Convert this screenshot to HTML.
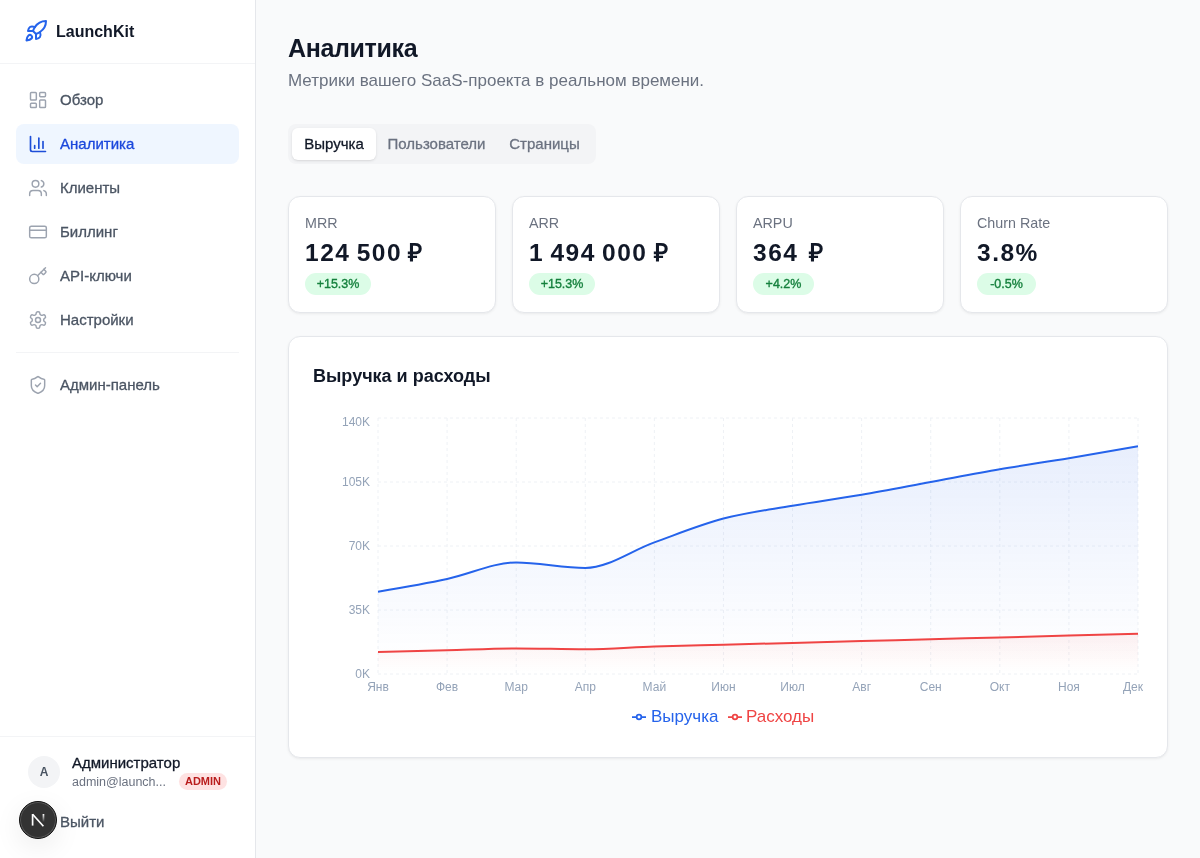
<!DOCTYPE html>
<html lang="ru">
<head>
<meta charset="utf-8">
<title>LaunchKit — Аналитика</title>
<style>
*{box-sizing:border-box;margin:0;padding:0}
html,body{width:1200px;height:858px;overflow:hidden}
body{font-family:"Liberation Sans",sans-serif;background:#f9fafb;position:relative;color:#111827;will-change:transform}
.abs{position:absolute}
.sidebar{position:absolute;left:0;top:0;width:256px;height:858px;background:#fff;border-right:1px solid #e5e7eb}
.logo{position:absolute;left:0;top:0;width:255px;height:64px;border-bottom:1px solid #f3f4f6}
.logo svg{position:absolute;left:24px;top:19px}
.logo .name{position:absolute;left:56px;top:22px;font-size:16px;font-weight:700;line-height:20px;color:#111827;white-space:nowrap}
.nav{position:absolute;left:16px;width:223px;height:40px;border-radius:8px}
.nav svg{position:absolute;left:12px;top:10px}
.nav span{position:absolute;left:44px;top:10px;font-size:15px;line-height:20px;color:#4b5563;white-space:nowrap;-webkit-text-stroke:0.3px currentColor}
.nav.active{background:#eff6ff}
.nav.active span{color:#1a47dc}
.divider{position:absolute;left:16px;top:352px;width:223px;height:1px;background:#f3f4f6}
.bottom{position:absolute;left:0;top:736px;width:255px;height:1px;background:#f3f4f6}
.avatar{position:absolute;left:28px;top:756px;width:32px;height:32px;border-radius:50%;background:#f3f4f6;color:#4b5563;font-size:12px;font-weight:700;text-align:center;line-height:32px}
.uname{position:absolute;left:72px;top:753px;font-size:15px;line-height:20px;color:#111827;white-space:nowrap;-webkit-text-stroke:0.3px currentColor}
.uemail{position:absolute;left:72px;top:773px;font-size:12.5px;line-height:18px;color:#6b7280;white-space:nowrap}
.badge-admin{position:absolute;left:179px;top:773px;width:48px;height:17px;border-radius:9px;background:#fee2e2;color:#b91c1c;font-size:11px;font-weight:700;line-height:17px;text-align:center}
.logout{position:absolute;left:60px;top:812px;font-size:15px;line-height:20px;color:#4b5563;-webkit-text-stroke:0.3px currentColor}
.nextjs{position:absolute;left:19px;top:801px;width:38px;height:38px;border-radius:50%;background:#333;border:1px solid #111;box-shadow:inset 0 0 0 1px rgba(255,255,255,.18),0 8px 28px rgba(0,0,0,.08)}
.h1{position:absolute;left:288px;top:32px;font-size:25px;letter-spacing:-0.35px;font-weight:700;line-height:32px;color:#111827;white-space:nowrap}
.sub{position:absolute;left:288px;top:69px;font-size:17px;line-height:24px;color:#6b7280;white-space:nowrap}
.tabs{position:absolute;left:288px;top:124px;width:308px;height:40px;border-radius:8px;background:#f3f4f6}
.tab{position:absolute;top:4px;height:32px;line-height:32px;font-size:15px;color:#6b7280;text-align:center;border-radius:6px;white-space:nowrap;-webkit-text-stroke:0.3px currentColor}
.tab.active{background:#fff;color:#111827;box-shadow:0 1px 3px rgba(0,0,0,.1),0 1px 2px -1px rgba(0,0,0,.1)}
.card{position:absolute;top:196px;width:208px;height:117px;background:#fff;border:1px solid #e5e7eb;border-radius:12px;box-shadow:0 1px 3px rgba(0,0,0,.06),0 1px 2px -1px rgba(0,0,0,.06)}
.card .lbl{position:absolute;left:16px;top:16px;font-size:14.3px;line-height:20px;color:#6b7280;white-space:nowrap}
.card .val{position:absolute;left:16px;top:40px;letter-spacing:1.5px;word-spacing:-2px;font-size:24.5px;font-weight:700;line-height:32px;color:#111827;white-space:nowrap}
.card .chg{position:absolute;left:16px;top:76px;height:22px;line-height:22px;border-radius:11px;background:#dcfce7;color:#15803d;font-size:12.5px;text-align:center;white-space:nowrap;-webkit-text-stroke:0.35px currentColor}
.ccard{position:absolute;left:288px;top:336px;width:880px;height:422px;background:#fff;border:1px solid #e5e7eb;border-radius:12px;box-shadow:0 1px 3px rgba(0,0,0,.06),0 1px 2px -1px rgba(0,0,0,.06)}
.ctitle{position:absolute;left:313px;top:362px;font-size:18px;font-weight:700;line-height:28px;color:#111827;white-space:nowrap}
.chart{position:absolute;left:0;top:0}
.legend{position:absolute;top:706px;left:0;width:1200px;height:22px;font-size:17px;line-height:22px}
</style>
</head>
<body>
<div class="sidebar"></div>
<div class="logo">
  <svg width="24" height="24" viewBox="0 0 24 24" fill="none" stroke="#2563eb" stroke-width="2" stroke-linecap="round" stroke-linejoin="round"><path d="M4.5 16.5c-1.5 1.26-2 5-2 5s3.74-.5 5-2c.71-.84.7-2.13-.09-2.91a2.18 2.18 0 0 0-2.91-.09z"/><path d="m12 15-3-3a22 22 0 0 1 2-3.95A12.88 12.88 0 0 1 22 2c0 2.72-.78 7.5-6 11a22.35 22.35 0 0 1-4 2z"/><path d="M9 12H4s.55-3.03 2-4c1.62-1.08 5 0 5 0"/><path d="M12 15v5s3.03-.55 4-2c1.08-1.62 0-5 0-5"/></svg>
  <div class="name">LaunchKit</div>
</div>

<div class="nav" style="top:80px"><svg width="20" height="20" viewBox="0 0 24 24" fill="none" stroke="#9ca3af" stroke-width="1.75" stroke-linecap="round" stroke-linejoin="round"><rect width="7" height="9" x="3" y="3" rx="1"/><rect width="7" height="5" x="14" y="3" rx="1"/><rect width="7" height="9" x="14" y="12" rx="1"/><rect width="7" height="5" x="3" y="16" rx="1"/></svg><span>Обзор</span></div>
<div class="nav active" style="top:124px"><svg width="20" height="20" viewBox="0 0 24 24" fill="none" stroke="#1d4ed8" stroke-width="2" stroke-linecap="round" stroke-linejoin="round"><path d="M3 3v16a2 2 0 0 0 2 2h16"/><path d="M18 17V9"/><path d="M13 17V5"/><path d="M8 17v-3"/></svg><span>Аналитика</span></div>
<div class="nav" style="top:168px"><svg width="20" height="20" viewBox="0 0 24 24" fill="none" stroke="#9ca3af" stroke-width="1.75" stroke-linecap="round" stroke-linejoin="round"><path d="M16 21v-2a4 4 0 0 0-4-4H6a4 4 0 0 0-4 4v2"/><circle cx="9" cy="7" r="4"/><path d="M22 21v-2a4 4 0 0 0-3-3.87"/><path d="M16 3.13a4 4 0 0 1 0 7.75"/></svg><span>Клиенты</span></div>
<div class="nav" style="top:212px"><svg width="20" height="20" viewBox="0 0 24 24" fill="none" stroke="#9ca3af" stroke-width="1.75" stroke-linecap="round" stroke-linejoin="round"><rect width="20" height="14" x="2" y="5" rx="2"/><line x1="2" x2="22" y1="10" y2="10"/></svg><span>Биллинг</span></div>
<div class="nav" style="top:256px"><svg width="20" height="20" viewBox="0 0 24 24" fill="none" stroke="#9ca3af" stroke-width="1.75" stroke-linecap="round" stroke-linejoin="round"><path d="m15.5 7.5 2.3 2.3a1 1 0 0 0 1.4 0l2.1-2.1a1 1 0 0 0 0-1.4L19 4"/><path d="m21 2-9.6 9.6"/><circle cx="7.5" cy="15.5" r="5.5"/></svg><span>API-ключи</span></div>
<div class="nav" style="top:300px"><svg width="20" height="20" viewBox="0 0 24 24" fill="none" stroke="#9ca3af" stroke-width="1.75" stroke-linecap="round" stroke-linejoin="round"><path d="M12.22 2h-.44a2 2 0 0 0-2 2v.18a2 2 0 0 1-1 1.73l-.43.25a2 2 0 0 1-2 0l-.15-.08a2 2 0 0 0-2.73.73l-.22.38a2 2 0 0 0 .73 2.73l.15.1a2 2 0 0 1 1 1.72v.51a2 2 0 0 1-1 1.74l-.15.09a2 2 0 0 0-.73 2.73l.22.38a2 2 0 0 0 2.73.73l.15-.08a2 2 0 0 1 2 0l.43.25a2 2 0 0 1 1 1.73V20a2 2 0 0 0 2 2h.44a2 2 0 0 0 2-2v-.18a2 2 0 0 1 1-1.73l.43-.25a2 2 0 0 1 2 0l.15.08a2 2 0 0 0 2.73-.73l.22-.39a2 2 0 0 0-.73-2.73l-.15-.08a2 2 0 0 1-1-1.74v-.5a2 2 0 0 1 1-1.74l.15-.09a2 2 0 0 0 .73-2.73l-.22-.38a2 2 0 0 0-2.73-.73l-.15.08a2 2 0 0 1-2 0l-.43-.25a2 2 0 0 1-1-1.73V4a2 2 0 0 0-2-2z"/><circle cx="12" cy="12" r="3"/></svg><span>Настройки</span></div>
<div class="divider"></div>
<div class="nav" style="top:365px"><svg width="20" height="20" viewBox="0 0 24 24" fill="none" stroke="#9ca3af" stroke-width="1.75" stroke-linecap="round" stroke-linejoin="round"><path d="M20 13c0 5-3.5 7.5-7.66 8.95a1 1 0 0 1-.67-.01C7.5 20.5 4 18 4 13V6a1 1 0 0 1 1-1c2 0 4.5-1.2 6.24-2.72a1.17 1.17 0 0 1 1.52 0C14.51 3.81 17 5 19 5a1 1 0 0 1 1 1z"/><path d="m9 12 2 2 4-4"/></svg><span>Админ-панель</span></div>

<div class="bottom"></div>
<div class="avatar">A</div>
<div class="uname">Администратор</div>
<div class="uemail">admin@launch...</div>
<div class="badge-admin">ADMIN</div>
<div class="logout">Выйти</div>
<div class="nextjs"><svg style="position:absolute;left:-1px;top:-1px" width="38" height="38" viewBox="0 0 38 38"><defs><linearGradient id="nfade" x1="0" y1="0" x2="0" y2="1"><stop offset="0" stop-color="#fff"/><stop offset="1" stop-color="#fff" stop-opacity="0"/></linearGradient></defs><path d="M13.6 13v11.6" stroke="#fff" stroke-width="1.7" fill="none"/><path d="M13.6 13.2l10.8 12" stroke="#fff" stroke-width="1.7" fill="none"/><rect x="23.6" y="13" width="1.7" height="8" fill="url(#nfade)"/></svg></div>

<div class="h1">Аналитика</div>
<div class="sub">Метрики вашего SaaS-проекта в реальном времени.</div>

<div class="tabs">
  <div class="tab active" style="left:4px;width:84px">Выручка</div>
  <div class="tab" style="left:88px;width:121px">Пользователи</div>
  <div class="tab" style="left:210px;width:93px">Страницы</div>
</div>

<div class="card" style="left:288px"><div class="lbl">MRR</div><div class="val">124 500 ₽</div><div class="chg" style="width:66px">+15.3%</div></div>
<div class="card" style="left:512px"><div class="lbl">ARR</div><div class="val">1 494 000 ₽</div><div class="chg" style="width:66px">+15.3%</div></div>
<div class="card" style="left:736px"><div class="lbl">ARPU</div><div class="val" style="word-spacing:2px">364 ₽</div><div class="chg" style="width:61px">+4.2%</div></div>
<div class="card" style="left:960px"><div class="lbl">Churn Rate</div><div class="val">3.8%</div><div class="chg" style="width:59px">-0.5%</div></div>

<div class="ccard"></div>
<div class="ctitle">Выручка и расходы</div>
<svg class="chart" width="1200" height="858" viewBox="0 0 1200 858">
<defs>
<linearGradient id="gr" x1="0" y1="0" x2="0" y2="1"><stop offset="5%" stop-color="#2563eb" stop-opacity="0.1"/><stop offset="95%" stop-color="#2563eb" stop-opacity="0"/></linearGradient>
<linearGradient id="ge" x1="0" y1="0" x2="0" y2="1"><stop offset="5%" stop-color="#ef4444" stop-opacity="0.07"/><stop offset="95%" stop-color="#ef4444" stop-opacity="0"/></linearGradient>
</defs>
<g stroke="#eef1f5" stroke-dasharray="3 3" fill="none"><line x1="378" y1="418" x2="1138" y2="418"/><line x1="378" y1="482" x2="1138" y2="482"/><line x1="378" y1="546" x2="1138" y2="546"/><line x1="378" y1="610" x2="1138" y2="610"/><line x1="378" y1="674" x2="1138" y2="674"/><line x1="378.00" y1="418" x2="378.00" y2="674"/><line x1="447.09" y1="418" x2="447.09" y2="674"/><line x1="516.18" y1="418" x2="516.18" y2="674"/><line x1="585.27" y1="418" x2="585.27" y2="674"/><line x1="654.36" y1="418" x2="654.36" y2="674"/><line x1="723.45" y1="418" x2="723.45" y2="674"/><line x1="792.55" y1="418" x2="792.55" y2="674"/><line x1="861.64" y1="418" x2="861.64" y2="674"/><line x1="930.73" y1="418" x2="930.73" y2="674"/><line x1="999.82" y1="418" x2="999.82" y2="674"/><line x1="1068.91" y1="418" x2="1068.91" y2="674"/><line x1="1138.00" y1="418" x2="1138.00" y2="674"/></g>
<g font-family="'Liberation Sans', sans-serif" font-size="12" fill="#94a3b8"><text x="370" y="425.80" text-anchor="end">140K</text><text x="370" y="486.30" text-anchor="end">105K</text><text x="370" y="550.30" text-anchor="end">70K</text><text x="370" y="614.30" text-anchor="end">35K</text><text x="370" y="678.30" text-anchor="end">0K</text><text x="378.00" y="690.5" text-anchor="middle">Янв</text><text x="447.09" y="690.5" text-anchor="middle">Фев</text><text x="516.18" y="690.5" text-anchor="middle">Мар</text><text x="585.27" y="690.5" text-anchor="middle">Апр</text><text x="654.36" y="690.5" text-anchor="middle">Май</text><text x="723.45" y="690.5" text-anchor="middle">Июн</text><text x="792.55" y="690.5" text-anchor="middle">Июл</text><text x="861.64" y="690.5" text-anchor="middle">Авг</text><text x="930.73" y="690.5" text-anchor="middle">Сен</text><text x="999.82" y="690.5" text-anchor="middle">Окт</text><text x="1068.91" y="690.5" text-anchor="middle">Ноя</text><text x="1143" y="690.5" text-anchor="end">Дек</text></g>
<path d="M378.00,591.71C401.03,587.75,424.06,583.79,447.09,578.91C470.12,574.04,493.15,562.46,516.18,562.46C539.21,562.46,562.24,567.94,585.27,567.94C608.30,567.94,631.33,550.57,654.36,542.34C677.39,534.11,700.42,524.67,723.45,518.57C746.48,512.48,769.52,509.73,792.55,505.77C815.58,501.81,838.61,498.76,861.64,494.80C884.67,490.84,907.70,486.27,930.73,482.00C953.76,477.73,976.79,473.16,999.82,469.20C1022.85,465.24,1045.88,462.04,1068.91,458.23C1091.94,454.42,1114.97,450.38,1138.00,446.34L1138.00,674.00L378.00,674.00Z" fill="url(#gr)"/>
<path d="M378.00,591.71C401.03,587.75,424.06,583.79,447.09,578.91C470.12,574.04,493.15,562.46,516.18,562.46C539.21,562.46,562.24,567.94,585.27,567.94C608.30,567.94,631.33,550.57,654.36,542.34C677.39,534.11,700.42,524.67,723.45,518.57C746.48,512.48,769.52,509.73,792.55,505.77C815.58,501.81,838.61,498.76,861.64,494.80C884.67,490.84,907.70,486.27,930.73,482.00C953.76,477.73,976.79,473.16,999.82,469.20C1022.85,465.24,1045.88,462.04,1068.91,458.23C1091.94,454.42,1114.97,450.38,1138.00,446.34" fill="none" stroke="#2563eb" stroke-width="2"/>
<path d="M378.00,652.06C401.03,651.45,424.06,650.84,447.09,650.23C470.12,649.62,493.15,648.40,516.18,648.40C539.21,648.40,562.24,649.31,585.27,649.31C608.30,649.31,631.33,647.33,654.36,646.57C677.39,645.81,700.42,645.35,723.45,644.74C746.48,644.13,769.52,643.52,792.55,642.91C815.58,642.30,838.61,641.70,861.64,641.09C884.67,640.48,907.70,639.87,930.73,639.26C953.76,638.65,976.79,638.04,999.82,637.43C1022.85,636.82,1045.88,636.21,1068.91,635.60C1091.94,634.99,1114.97,634.38,1138.00,633.77L1138.00,674.00L378.00,674.00Z" fill="url(#ge)"/>
<path d="M378.00,652.06C401.03,651.45,424.06,650.84,447.09,650.23C470.12,649.62,493.15,648.40,516.18,648.40C539.21,648.40,562.24,649.31,585.27,649.31C608.30,649.31,631.33,647.33,654.36,646.57C677.39,645.81,700.42,645.35,723.45,644.74C746.48,644.13,769.52,643.52,792.55,642.91C815.58,642.30,838.61,641.70,861.64,641.09C884.67,640.48,907.70,639.87,930.73,639.26C953.76,638.65,976.79,638.04,999.82,637.43C1022.85,636.82,1045.88,636.21,1068.91,635.60C1091.94,634.99,1114.97,634.38,1138.00,633.77" fill="none" stroke="#ef4444" stroke-width="2"/>
</svg>
<div class="legend">
  <svg class="abs" style="left:632px;top:4px" width="14" height="14" viewBox="0 0 32 32"><path stroke-width="4" fill="none" stroke="#2563eb" d="M0,16h10.667A5.333,5.333,0,1,1,21.333,16H32M21.333,16A5.333,5.333,0,1,1,10.667,16"/></svg>
  <span class="abs" style="left:651px;top:0;color:#2563eb">Выручка</span>
  <svg class="abs" style="left:728px;top:4px" width="14" height="14" viewBox="0 0 32 32"><path stroke-width="4" fill="none" stroke="#ef4444" d="M0,16h10.667A5.333,5.333,0,1,1,21.333,16H32M21.333,16A5.333,5.333,0,1,1,10.667,16"/></svg>
  <span class="abs" style="left:746px;top:0;color:#ef4444">Расходы</span>
</div>
</body>
</html>
